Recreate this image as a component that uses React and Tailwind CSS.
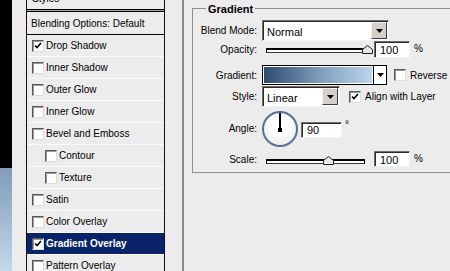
import React from "react"

const font = { fontFamily: '"Liberation Sans", Arial, sans-serif' }

const layers = [
  { name: "Drop Shadow", checked: true },
  { name: "Inner Shadow" },
  { name: "Outer Glow" },
  { name: "Inner Glow" },
  { name: "Bevel and Emboss" },
  { name: "Contour", indent: true },
  { name: "Texture", indent: true },
  { name: "Satin" },
  { name: "Color Overlay" },
  { name: "Gradient Overlay", checked: true, active: true },
  { name: "Pattern Overlay" },
]

function Check() {
  return (
    <svg width="8" height="8" viewBox="0 0 8 8">
      <path d="M1 3.5 L3 5.5 L7 1" fill="none" stroke="#000" strokeWidth="1.6" />
    </svg>
  )
}

function Checkbox({ checked }) {
  return (
    <div className="w-[12px] h-[12px] shrink-0 bg-white border border-t-[#5a5a5a] border-l-[#5a5a5a] border-r-[#dcdcdc] border-b-[#dcdcdc] shadow-[inset_1px_1px_0_#9a9a9a] flex items-center justify-center">
      {checked && <Check />}
    </div>
  )
}

function Arrow() {
  return (
    <svg width="7" height="4" viewBox="0 0 7 4">
      <path d="M0 0 H7 L3.5 4 Z" fill="#000" />
    </svg>
  )
}

function Select({ value, width }) {
  return (
    <div
      className="h-[21px] flex items-center bg-white border border-t-[#6f6f6f] border-l-[#6f6f6f] border-r-[#f4f4f4] border-b-[#f4f4f4] shadow-[inset_1px_1px_0_#2a2a2a]"
      style={{ width }}
    >
      <span className="flex-1 pl-[4px] pt-[3px] text-[11px] text-black">{value}</span>
      <div className="w-[16px] h-[17px] mr-[1px] bg-[#d4d0c8] border border-t-[#f0f0f0] border-l-[#f0f0f0] border-r-[#404040] border-b-[#404040] flex items-center justify-center">
        <Arrow />
      </div>
    </div>
  )
}

function NumBox({ value, w, h }) {
  return (
    <div
      className="bg-white border border-t-[#6f6f6f] border-l-[#6f6f6f] border-r-[#f4f4f4] border-b-[#f4f4f4] shadow-[inset_1px_1px_0_#2a2a2a] pl-[5px] text-[11px] leading-none flex items-center pt-[2px]"
      style={{ width: w, height: h }}
    >
      {value}
    </div>
  )
}

function Thumb() {
  return (
    <svg width="11" height="9" viewBox="0 0 11 9">
      <path d="M5.5 0.5 L10.5 4.5 V8.5 H0.5 V4.5 Z" fill="#e6e6e6" stroke="#222" />
    </svg>
  )
}

function Slider({ width, pos }) {
  return (
    <div className="relative h-[9px] flex items-center" style={{ width }}>
      <div className="w-full h-[5px] bg-white border border-black border-b-[#3a3a3a] border-t-2" />
      <div className="absolute top-[-1px]" style={{ left: pos }}>
        <Thumb />
      </div>
    </div>
  )
}

function Label({ children }) {
  return <div className="w-[64px] mr-[5px] text-right text-[10px] shrink-0">{children}</div>
}

export default function App() {
  return (
    <div className="w-[450px] h-[271px] flex overflow-hidden bg-[#ececec] text-black" style={font}>
      {/* canvas edge */}
      <div className="w-[12px] flex flex-col shrink-0">
        <div className="h-[168px] bg-black shrink-0" />
        <div className="flex-1 bg-gradient-to-b from-[#7f9cb8] to-[#c5d8ea]" />
      </div>

      {/* styles list */}
      <div className="ml-[14px] w-[139px] shrink-0 border-l border-r border-[#111] bg-[#ececec] flex flex-col">
        <div className="h-[9px] shrink-0 overflow-hidden pl-[5px] text-[10px] leading-none">
          <div className="-mt-[6px]">Styles</div>
        </div>
        <div className="h-[3px] shrink-0 border-y border-black bg-[#a0a0a0]" />
        <div className="h-[23px] shrink-0 border-b border-black pl-[4px] flex items-center text-[10px]">
          Blending Options: Default
        </div>
        {layers.map(l => (
          <div
            key={l.name}
            className={
              "h-[22px] shrink-0 border-b border-[#fbfbfb] flex items-center text-[10px] " +
              (l.indent ? "pl-[18px] " : "pl-[5px] ") +
              (l.active ? "bg-[#0a246a] text-white font-bold" : "")
            }
          >
            <Checkbox checked={l.checked} />
            <span className="ml-[2px]">{l.name}</span>
          </div>
        ))}
      </div>

      <div className="ml-[17px] w-[2px] bg-[#8a8a8a] shrink-0" />

      {/* settings */}
      <div className="flex-1 pl-[8px] pt-[8px]">
        <div className="relative w-[300px] border border-[#8e8e8e] pb-[5px] flex flex-col">
          <div className="absolute -top-[8px] left-[13px] px-[2px] bg-[#ececec] text-[11px] font-bold">Gradient</div>

          <div className="mt-[11px] flex items-center">
            <Label>Blend Mode:</Label>
            <Select value="Normal" width={127} />
          </div>

          <div className="h-[17px] flex items-center">
            <Label>Opacity:</Label>
            <div className="ml-[4px] mt-[2px]">
              <Slider width={103} pos={96} />
            </div>
            <div className="ml-[5px]">
              <NumBox value="100" w={36} h={17} />
            </div>
            <span className="ml-[4px] text-[10px] -mt-[2px]">%</span>
          </div>

          <div className="mt-[7px] h-[20px] flex items-center">
            <Label>Gradient:</Label>
            <div className="w-[125px] h-[20px] border border-black flex">
              <div className="flex-1 border border-white bg-gradient-to-r from-[#2c4c70] via-[#7d9bb9] to-[#bcd5ea]" />
              <div className="w-[13px] bg-white border-l border-black flex items-center justify-center">
                <Arrow />
              </div>
            </div>
            <div className="ml-[7px]">
              <Checkbox />
            </div>
            <span className="ml-[4px] text-[10px]">Reverse</span>
          </div>

          <div className="mt-[1px] flex items-center">
            <Label>Style:</Label>
            <Select value="Linear" width={78} />
            <div className="ml-[9px]">
              <Checkbox checked />
            </div>
            <span className="ml-[4px] text-[10px]">Align with Layer</span>
          </div>

          <div className="mt-[3px] h-[37px] flex items-center">
            <Label>Angle:</Label>
            <div className="relative w-[36px] h-[36px] rounded-full border-2 border-[#5b6e98] bg-[radial-gradient(circle_at_50%_40%,#ffffff_30%,#e4e4e4_100%)]">
              <div className="absolute left-[15px] top-0 w-[2px] h-[17px] bg-black" />
              <div className="absolute left-[14px] top-[15px] w-[4px] h-[4px] bg-black" />
            </div>
            <div className="ml-[3px] mt-[2px]">
              <NumBox value="90" w={41} h={16} />
            </div>
            <span className="ml-[3px] -mt-[8px] text-[10px]">°</span>
          </div>

          <div className="mt-[4px] h-[16px] flex items-center">
            <Label>Scale:</Label>
            <div className="ml-[4px] mt-[4px]">
              <Slider width={99} pos={57} />
            </div>
            <div className="ml-[9px]">
              <NumBox value="100" w={36} h={16} />
            </div>
            <span className="ml-[4px] text-[10px] -mt-[2px]">%</span>
          </div>
        </div>
      </div>
    </div>
  )
}
